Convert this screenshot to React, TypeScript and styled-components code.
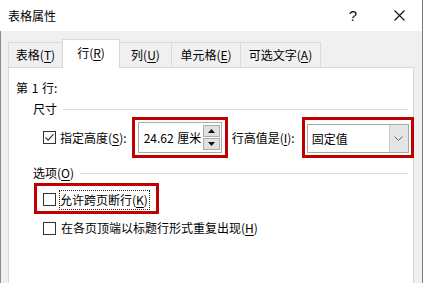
import React from "react";
import styled, { createGlobalStyle } from "styled-components";

const Global = createGlobalStyle`
  html, body {
    margin: 0;
    padding: 0;
    background: #ffffff;
  }
  body {
    font-family: "Noto Sans CJK SC", "Liberation Sans", sans-serif;
    font-size: 12px;
    color: #000;
  }
`;

const Window = styled.div`
  width: 423px;
  height: 283px;
  box-sizing: border-box;
  border-right: 1px solid #7d7d7d;
  display: flex;
  flex-direction: column;
  overflow: hidden;
`;

const TitleBar = styled.div`
  height: 31px;
  flex: none;
  background: #fff;
  display: flex;
  align-items: center;
  padding-left: 8px;
`;

const Title = styled.div`
  flex: 1;
  font-size: 12px;
  line-height: 16px;
`;

const TitleButton = styled.div`
  width: 46px;
  height: 31px;
  display: flex;
  align-items: center;
  justify-content: center;
  font-family: "Liberation Sans", sans-serif;
  font-size: 15px;
  color: #111;
`;

const Body = styled.div`
  flex: 1;
  display: flex;
  flex-direction: column;
  background: #f0f0f0;
  border-left: 1px solid #8c8c8c;
  padding: 9px 8px 0 7px;
  min-height: 0;
`;

const TabRow = styled.div`
  display: flex;
  align-items: flex-end;
  height: 28px;
  position: relative;
  z-index: 1;
  margin-bottom: -1px;
`;

const Tab = styled.div<{ $w: number; $active?: boolean }>`
  width: ${(p) => p.$w}px;
  height: ${(p) => (p.$active ? 29 : 26)}px;
  box-sizing: border-box;
  border: 1px solid #d9d9d9;
  border-bottom: ${(p) => (p.$active ? "none" : "1px solid #d9d9d9")};
  margin-left: -1px;
  background: ${(p) => (p.$active ? "#fff" : "#f0f0f0")};
  display: flex;
  align-items: center;
  justify-content: center;
  padding-bottom: ${(p) => (p.$active ? 3 : 0)}px;
  line-height: 16px;
  &:first-child {
    margin-left: 0;
  }
`;

const Key = styled.u`
  text-decoration-thickness: 1px;
  text-underline-offset: 2px;
`;

const Panel = styled.div`
  flex: 1;
  background: #fff;
  border: 1px solid #d9d9d9;
  border-bottom: none;
  padding: 12px 5px 0 7px;
  display: flex;
  flex-direction: column;
  line-height: 16px;
`;

const RowLabel = styled.div`
  height: 16px;
  word-spacing: 1px;
`;

const GroupHeader = styled.div<{ $top: number }>`
  display: flex;
  align-items: center;
  gap: 6px;
  margin: ${(p) => p.$top}px 0 0 17px;
  height: 16px;

  &::after {
    content: "";
    flex: 1;
    height: 1px;
    background: #dcdcdc;
  }
`;

const SizeRow = styled.div`
  display: flex;
  align-items: center;
  height: 41px;
  margin-left: 27px;
`;

const Box = styled.span`
  width: 13px;
  height: 13px;
  box-sizing: border-box;
  border: 1px solid #333;
  background: #fff;
  flex: none;
  display: inline-flex;
  align-items: center;
  justify-content: center;
`;

const Label = styled.span<{ $gap?: number }>`
  margin-left: ${(p) => p.$gap ?? 4}px;
  white-space: nowrap;
`;

const RedFrame = styled.div<{ $ml: number; $pad: string }>`
  border: 3px solid #c00000;
  padding: ${(p) => p.$pad};
  margin-left: ${(p) => p.$ml}px;
  display: flex;
  align-items: center;
`;

const Spin = styled.div`
  width: 84px;
  height: 31px;
  box-sizing: border-box;
  border: 1px solid #a9a9a9;
  display: flex;
  align-items: center;
  padding: 2px 1px 2px 5px;
`;

const SpinText = styled.span`
  flex: 1;
  line-height: 16px;
  word-spacing: 1px;
`;

const SpinButtons = styled.div`
  width: 17px;
  height: 25px;
  display: flex;
  flex-direction: column;
  gap: 1px;
`;

const SpinButton = styled.div`
  flex: 1;
  background: #e1e1e1;
  border: 1px solid #adadad;
  display: flex;
  align-items: center;
  justify-content: center;
`;

const Select = styled.div`
  width: 102px;
  height: 29px;
  box-sizing: border-box;
  border: 1px solid #a9a9a9;
  display: flex;
  align-items: stretch;
  background: #fff;
`;

const SelectText = styled.span`
  flex: 1;
  display: flex;
  align-items: center;
  padding-left: 4px;
`;

const SelectButton = styled.span`
  width: 18px;
  background: #e5e5e5;
  border-left: 1px solid #c8c8c8;
  display: flex;
  align-items: center;
  justify-content: center;
`;

const OptionFrame = styled.div`
  align-self: flex-start;
  margin: 2px 0 0 18px;
  border: 3px solid #c00000;
  height: 31px;
  box-sizing: border-box;
  padding: 2px 6px 0 6px;
  display: flex;
  align-items: center;
`;

const Focus = styled.span`
  margin-left: 3px;
  border: 1px dotted #222;
  padding: 1px 1px 1px 0;
  line-height: 16px;
  white-space: nowrap;
`;

const OptionRow = styled.div`
  display: flex;
  align-items: center;
  margin: 6px 0 0 27px;
  height: 16px;
`;

const Check = () => (
  <svg width="11" height="11" viewBox="0 0 11 11">
    <path d="M1.5 5.5 L4.2 8.2 L9.5 2.2" fill="none" stroke="#333" strokeWidth="1.1" />
  </svg>
);

const Arrow = ({ up }: { up?: boolean }) => (
  <svg width="7" height="4" viewBox="0 0 7 4">
    <path d={up ? "M0 4 L3.5 0 L7 4 Z" : "M0 0 L3.5 4 L7 0 Z"} fill="#111" />
  </svg>
);

const Chevron = () => (
  <svg width="9" height="5" viewBox="0 0 9 5">
    <path d="M0.5 0.5 L4.5 4.5 L8.5 0.5" fill="none" stroke="#666" strokeWidth="1" />
  </svg>
);

const App: React.FC = () => {
  return (
    <>
      <Global />
      <Window>
        <TitleBar>
          <Title>表格属性</Title>
          <TitleButton>?</TitleButton>
          <TitleButton>
            <svg width="11" height="11" viewBox="0 0 11 11">
              <path d="M0.5 0.5 L10.5 10.5 M10.5 0.5 L0.5 10.5" stroke="#111" strokeWidth="1.1" />
            </svg>
          </TitleButton>
        </TitleBar>
        <Body>
          <TabRow>
            <Tab $w={55}>
              表格(<Key>T</Key>)
            </Tab>
            <Tab $w={58} $active>
              行(<Key>R</Key>)
            </Tab>
            <Tab $w={53}>
              列(<Key>U</Key>)
            </Tab>
            <Tab $w={70}>
              单元格(<Key>E</Key>)
            </Tab>
            <Tab $w={81}>
              可选文字(<Key>A</Key>)
            </Tab>
          </TabRow>
          <Panel>
            <RowLabel>第 1 行:</RowLabel>
            <GroupHeader $top={5}>尺寸</GroupHeader>
            <SizeRow>
              <Box>
                <Check />
              </Box>
              <Label>
                指定高度(<Key>S</Key>):
              </Label>
              <RedFrame $ml={5} $pad="2px 3px">
                <Spin>
                  <SpinText>24.62 厘米</SpinText>
                  <SpinButtons>
                    <SpinButton>
                      <Arrow up />
                    </SpinButton>
                    <SpinButton>
                      <Arrow />
                    </SpinButton>
                  </SpinButtons>
                </Spin>
              </RedFrame>
              <Label $gap={4}>
                行高值是(<Key>I</Key>):
              </Label>
              <RedFrame $ml={7} $pad="4px 2px 2px 2px">
                <Select>
                  <SelectText>固定值</SelectText>
                  <SelectButton>
                    <Chevron />
                  </SelectButton>
                </Select>
              </RedFrame>
            </SizeRow>
            <GroupHeader $top={7}>
              <span>
                选项(<Key>O</Key>)
              </span>
            </GroupHeader>
            <OptionFrame>
              <Box />
              <Focus>
                允许跨页断行(<Key>K</Key>)
              </Focus>
            </OptionFrame>
            <OptionRow>
              <Box />
              <Label $gap={5}>
                在各页顶端以标题行形式重复出现(<Key>H</Key>)
              </Label>
            </OptionRow>
          </Panel>
        </Body>
      </Window>
    </>
  );
};

export default App;
